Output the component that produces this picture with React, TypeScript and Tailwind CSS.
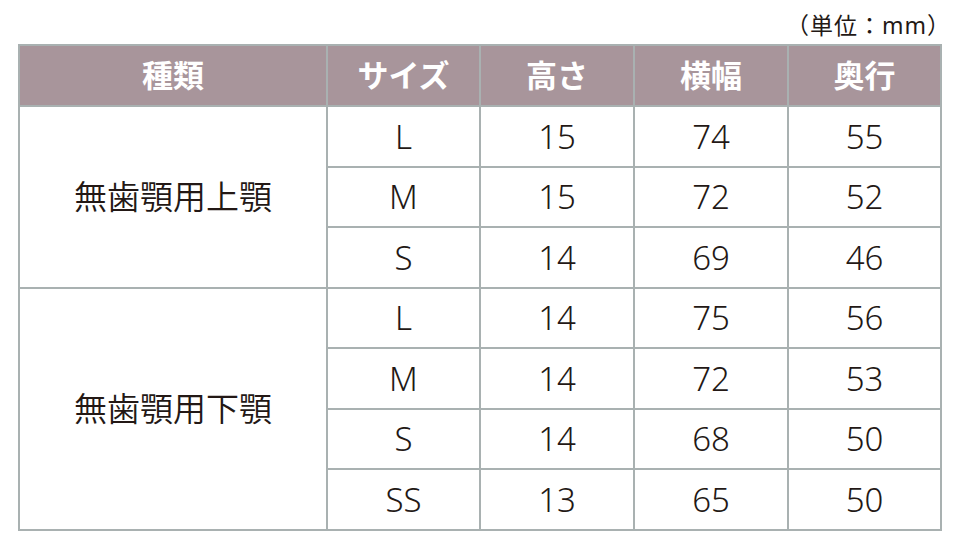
const groups = [
  {
    name: "無歯顎用上顎",
    rows: [
      ["L", "15", "74", "55"],
      ["M", "15", "72", "52"],
      ["S", "14", "69", "46"],
    ],
  },
  {
    name: "無歯顎用下顎",
    rows: [
      ["L", "14", "75", "56"],
      ["M", "14", "72", "53"],
      ["S", "14", "68", "50"],
      ["SS", "13", "65", "50"],
    ],
  },
]

const headers = ["種類", "サイズ", "高さ", "横幅", "奥行"]

export default function App() {
  return (
    <div
      className="w-[959px] h-[539px] bg-white text-[#231815]"
      style={{ fontFamily: '"Noto Sans", "Noto Sans CJK JP", sans-serif' }}
    >
      <div className="w-[922px] ml-[18px] pt-[6px]">
        <p className="text-right text-[23px] leading-[38px] tracking-[1px] mr-[-11px]">（単位：mm）</p>
        <table className="w-full table-fixed border-collapse">
          <colgroup>
            <col className="w-[308px]" />
            <col className="w-[153px]" />
            <col className="w-[154px]" />
            <col className="w-[154px]" />
            <col className="w-[153px]" />
          </colgroup>
          <thead>
            <tr className="h-[61px] bg-[#a8959b]">
              {headers.map((h) => (
                <th
                  key={h}
                  className="border-2 border-[#a9b1b1] text-white text-[31px] font-bold p-0 align-middle"
                >
                  {h}
                </th>
              ))}
            </tr>
          </thead>
          <tbody>
            {groups.map((g) =>
              g.rows.map((r, i) => (
                <tr key={g.name + i} className="h-[60.5px]">
                  {i === 0 && (
                    <td
                      rowSpan={g.rows.length}
                      className="border-2 border-[#a9b1b1] text-center text-[33px] font-[350] p-0 align-middle"
                    >
                      {g.name}
                    </td>
                  )}
                  {r.map((v, j) => (
                    <td
                      key={j}
                      className="border-2 border-[#a9b1b1] text-center text-[33px] font-light p-0 align-middle leading-none"
                    >
                      {v}
                    </td>
                  ))}
                </tr>
              ))
            )}
          </tbody>
        </table>
      </div>
    </div>
  )
}
